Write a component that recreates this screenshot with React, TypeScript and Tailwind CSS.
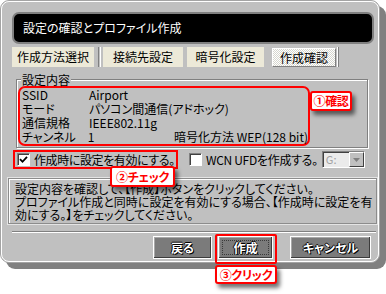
const rows = [
  { label: "SSID", value: "Airport" },
  { label: "モード", value: "パソコン間通信(アドホック)" },
  { label: "通信規格", value: "IEEE802.11g" },
];

const Callout = ({ text, className }: { text: string; className: string }) => (
  <div
    className={`absolute flex items-center justify-center whitespace-nowrap rounded-[3px] border-2 border-[#ff0000] bg-white text-[12px] font-bold leading-none tracking-[-0.3px] text-[#ff0000] shadow-[3px_4px_4px_rgba(0,0,0,0.55)] ${className}`}
  >
    {text}
  </div>
);

const CheckBox = ({ checked }: { checked?: boolean }) => (
  <span className="flex h-[13px] w-[13px] shrink-0 items-center justify-center border border-b-white border-l-[#808080] border-r-white border-t-[#808080] bg-white shadow-[inset_1px_1px_0_#404040]">
    {checked && (
      <svg width="9" height="9" viewBox="0 0 9 9">
        <path d="M1 4.2 L3.5 6.8 L8 1.8" stroke="#000" strokeWidth="1.8" fill="none" />
      </svg>
    )}
  </span>
);

const Button = ({ text, width, focused }: { text: string; width: string; focused?: boolean }) => (
  <button
    type="button"
    className={`relative flex h-[23px] items-center justify-center whitespace-nowrap border border-white bg-[#7b7b7b] text-[12px] font-bold leading-none text-white shadow-[inset_-1px_-1px_0_#3c3c3c,inset_1px_1px_0_#a8a8a8] [text-shadow:1px_1px_0_#000,-1px_0_0_#000,0_-1px_0_#000] ${width}`}
  >
    {focused && (
      <span className="absolute inset-[3px] border border-dotted border-[#3a3a3a]" />
    )}
    {text}
  </button>
);

export default function App() {
  return (
    <div className="relative h-[294px] w-[386px] overflow-hidden whitespace-nowrap bg-white font-['Noto_Sans_CJK_JP',sans-serif] text-black [font-feature-settings:'palt']">
      <div className="flex h-[263px] w-[380px] flex-col rounded-[9px] border border-[#a4a4a4] bg-[#c0c0c0] shadow-[6px_6px_0_#808080]">
        <div className="flex flex-1 flex-col rounded-[8px] border border-white">
          {/* title */}
          <div className="ml-[10px] mr-[4px] mt-[10px] flex h-[32px] items-center rounded-[7px] border-2 border-[#808080] bg-black pl-[9px] text-[12px] text-white">
            設定の確認とプロファイル作成
          </div>

          {/* tabs */}
          <div className="ml-[10px] mt-[3px] flex h-[20px] items-stretch text-[12px]">
            <div className="flex w-[82px] items-center justify-center bg-[#ece9d8]">作成方法選択</div>
            <div className="ml-[4px] w-[1px] bg-[#808080]" />
            <div className="ml-[1px] w-[1px] bg-white" />
            <div className="ml-[2px] flex w-[80px] items-center justify-center bg-[#ece9d8]">接続先設定</div>
            <div className="ml-[4px] flex w-[77px] items-center justify-center bg-[#ece9d8]">暗号化設定</div>
            <div className="ml-[8px] mt-[1px] flex h-[19px] w-[64px] items-center justify-center border border-b-[#808080] border-l-white border-r-[#808080] border-t-white bg-[conic-gradient(#ffffff_25%,#d6d6ce_0_50%,#ffffff_0_75%,#d6d6ce_0)] bg-[length:2px_2px]">
              作成確認
            </div>
            <div className="ml-[1px] w-[1px] bg-white" />
            <div className="w-[1px] bg-[#808080]" />
          </div>

          {/* group box */}
          <fieldset className="ml-[14px] mt-[6px] w-[352px] border border-[#808080] pb-[1px] shadow-[inset_1px_1px_0_#fff,1px_1px_0_#fff]">
            <legend className="ml-[4px] bg-[#c0c0c0] px-[1px] text-[12px] leading-[13px]">設定内容</legend>
            <div className="ml-[1px] w-[292px] rounded-[7px] border-2 border-[#ff0000] pl-[2px] text-[12px] leading-[14px]">
              {rows.map((r) => (
                <div key={r.label} className="flex">
                  <span className="w-[67px]">{r.label}</span>
                  <span>{r.value}</span>
                </div>
              ))}
              <div className="flex">
                <span className="w-[67px]">チャンネル</span>
                <span className="w-[88px]">1</span>
                <span>暗号化方法 WEP(128 bit)</span>
              </div>
            </div>
          </fieldset>

          {/* checkboxes */}
          <div className="ml-[11px] mt-[2px] flex h-[19px] items-center text-[12px] leading-[14px]">
            <div className="flex h-[19px] w-[165px] items-center gap-[4px] border-2 border-[#ff0000] pl-[2px]">
              <CheckBox checked />
              <span className="tracking-[-0.4px]">作成時に設定を有効にする。</span>
            </div>
            <div className="ml-[11px] flex items-center gap-[4px]">
              <CheckBox />
              <span className="tracking-[-0.3px]">WCN UFDを作成する。</span>
            </div>
            <div className="ml-[4px] flex h-[17px] w-[43px] border border-b-white border-l-[#808080] border-r-white border-t-[#808080] bg-[#ebebeb] shadow-[inset_1px_1px_0_#404040]">
              <span className="flex-1 pl-[3px] text-[11px] leading-[15px] text-[#a0a0a0]">G:</span>
              <span className="flex w-[15px] items-center justify-center border border-b-[#404040] border-l-white border-r-[#404040] border-t-white bg-[#c0c0c0]">
                <svg width="7" height="4" viewBox="0 0 7 4">
                  <path d="M0 0 H7 L3.5 4 Z" fill="#808080" />
                </svg>
              </span>
            </div>
          </div>

          {/* description */}
          <div className="ml-[6px] mt-[9px] h-[46px] w-[369px] overflow-hidden border border-[#8c8c8c] pl-[6px] pt-[3px] text-[12px] leading-[13px] shadow-[inset_1px_1px_0_#fff,0_0_0_1px_#e4e4e4]">
            <p>設定内容を確認して、【作成】ボタンをクリックしてください。</p>
            <p>プロファイル作成と同時に設定を有効にする場合、【作成時に設定を有</p>
            <p>効にする。】をチェックしてください。</p>
          </div>

          {/* separator */}
          <div className="ml-[10px] mt-[7px] h-[2px] w-[364px] border-b border-t border-b-white border-t-[#808080]" />

          {/* buttons */}
          <div className="ml-[151px] mt-[3px] flex">
            <Button text="戻る" width="w-[59px]" />
            <div className="ml-[6px]">
              <Button text="作成" width="w-[55px]" focused />
            </div>
            <div className="ml-[17px]">
              <Button text="キャンセル" width="w-[81px]" />
            </div>
          </div>
        </div>
      </div>

      {/* annotations */}
      <div className="absolute left-[215px] top-[234px] h-[30px] w-[62px] rounded-[2px] border-2 border-[#ff0000]" />
      <Callout text="①確認" className="left-[310px] top-[91px] h-[20px] w-[42px]" />
      <Callout text="②チェック" className="left-[110px] top-[166px] h-[21px] w-[65px]" />
      <Callout text="③クリック" className="left-[215px] top-[265px] h-[19px] w-[62px]" />
    </div>
  );
}
